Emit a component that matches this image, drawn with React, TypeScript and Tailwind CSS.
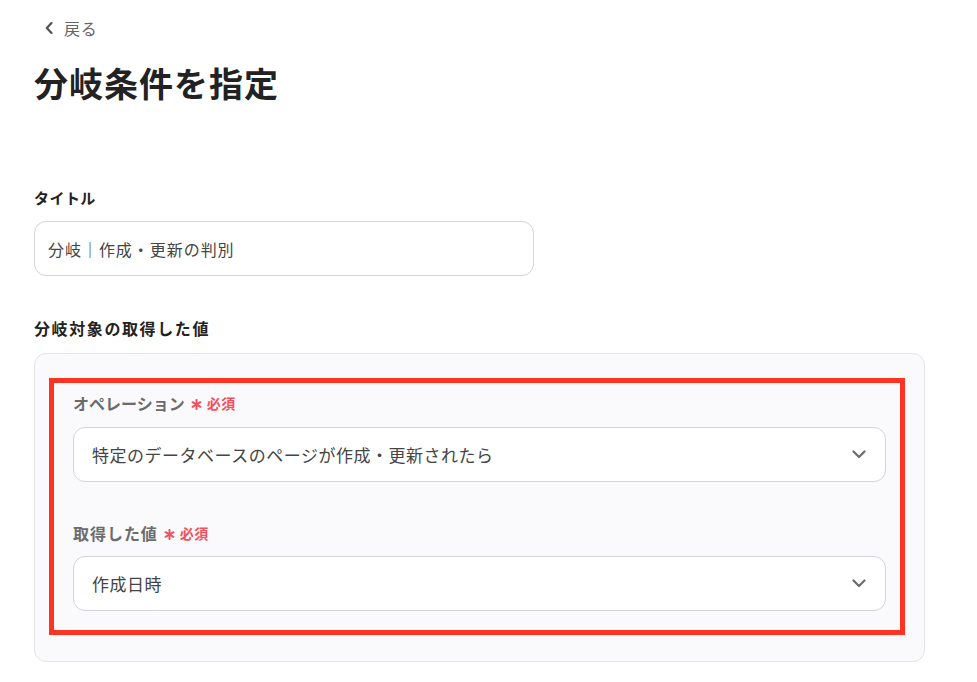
const font = { fontFamily: '"Noto Sans CJK JP", "Noto Sans", sans-serif' };

function Chevron() {
  return (
    <svg width="14" height="9" viewBox="0 0 14 9" fill="none" className="shrink-0">
      <path d="M1.5 1.5L7 7L12.5 1.5" stroke="#6b6b6b" strokeWidth="2.2" strokeLinecap="round" strokeLinejoin="round" />
    </svg>
  );
}

function BackArrow() {
  return (
    <svg width="10" height="14" viewBox="0 0 10 14" fill="none" className="shrink-0">
      <path d="M7.5 2L2.8 7L7.5 12" stroke="#555" strokeWidth="2.3" strokeLinecap="round" strokeLinejoin="round" />
    </svg>
  );
}

function Required() {
  return (
    <span className="ml-[6px] flex items-center gap-[5px] text-[#f2505d]">
      <svg width="11" height="11" viewBox="0 0 10 10" className="mt-[3px]">
        <g stroke="#f2505d" strokeWidth="1.8" strokeLinecap="round">
          <line x1="5" y1="0.8" x2="5" y2="9.2" />
          <line x1="1.4" y1="2.9" x2="8.6" y2="7.1" />
          <line x1="1.4" y1="7.1" x2="8.6" y2="2.9" />
        </g>
      </svg>
      <span className="text-[14px] font-semibold leading-[24px] tracking-[0.04em]">必須</span>
    </span>
  );
}

function SelectBox({ value }: { value: string }) {
  return (
    <div className="flex h-[55px] items-center justify-between rounded-[12px] border border-[#d3d3dc] bg-white pl-[18px] pr-[19px]">
      <span className="text-[17px] text-[#444] tracking-[0.03em]">{value}</span>
      <Chevron />
    </div>
  );
}

export default function App() {
  return (
    <div className="min-h-screen bg-white px-[34px] pt-[18px] text-[#222]" style={font}>
      <div className="flex h-[20px] items-center gap-[10px] pl-[10px] text-[16px] text-[#666]">
        <BackArrow />
        <span className="tracking-[0.04em]">戻る</span>
      </div>

      <h1 className="mt-[25px] text-[34px] font-bold leading-[40px] tracking-[0.03em]">分岐条件を指定</h1>

      <div className="mt-[83px] text-[15px] font-bold leading-[24px] tracking-[0.03em]">タイトル</div>
      <div className="mt-[11px] flex h-[55px] w-[500px] items-center rounded-[12px] border border-[#d3d3dc] bg-white px-[13px]">
        <span className="text-[16px] text-[#444] tracking-[0.06em]">分岐｜作成・更新の判別</span>
      </div>

      <div className="mt-[40px] text-[16px] font-bold leading-[24px] tracking-[0.1em]">分岐対象の取得した値</div>
      <div className="mt-[13px] w-[891px] rounded-[12px] border border-[#e4e4ea] bg-[#faf9fc] pt-[24px] pl-[14px] pr-[19px] pb-[26px]">
        <div className="border-[5px] border-[#ff3322] pt-[8px] pl-[19px] pr-[14px] pb-[19px]">
          <div className="flex items-center text-[16px] font-bold leading-[24px] text-[#6b6b6b]">
            オペレーション
            <Required />
          </div>
          <div className="mt-[12px]">
            <SelectBox value="特定のデータベースのページが作成・更新されたら" />
          </div>
          <div className="mt-[39px] flex items-center text-[16px] font-bold leading-[24px] tracking-[0.06em] text-[#6b6b6b]">
            取得した値
            <Required />
          </div>
          <div className="mt-[11px]">
            <SelectBox value="作成日時" />
          </div>
        </div>
      </div>
    </div>
  );
}
